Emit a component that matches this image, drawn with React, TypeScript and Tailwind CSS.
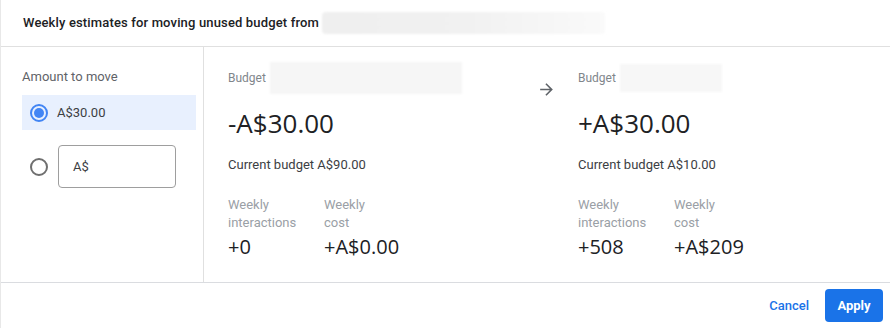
export default function App() {
  return (
    <div className="w-[890px] h-[328px] bg-white border-l border-[#e8e8e8] flex flex-col font-['Roboto',sans-serif] text-[#3c4043]">
      {/* header */}
      <div className="h-[47px] shrink-0 flex items-center pl-[22px] border-b border-[#e0e0e0]">
        <span className="text-[13px] font-medium text-[#202124] tracking-[0.15px]">
          Weekly estimates for moving unused budget from
        </span>
        <div className="ml-[3px] w-[283px] h-[22px] rounded-sm bg-gradient-to-r from-[#efefef] via-[#f1f1f1] to-[#fafafa] blur-[1px]"></div>
      </div>

      {/* body */}
      <div className="flex flex-1 border-b border-[#dadce0]">
        <div className="w-[203px] shrink-0 border-r border-[#e0e0e0] pt-[22px] pl-[21px] pr-[7px]">
          <div className="text-[13px] text-[#5f6368] leading-[16px] mb-[10px]">Amount to move</div>
          <div className="h-[35px] bg-[#e8f0fe] flex items-center pl-[8px]">
            <span className="w-[18px] h-[18px] rounded-full border-2 border-[#4285f4] flex items-center justify-center">
              <span className="w-[10px] h-[10px] rounded-full bg-[#4285f4]"></span>
            </span>
            <span className="ml-[9px] text-[13px] text-[#3c4043]">A$30.00</span>
          </div>
          <div className="flex items-center mt-[15px]">
            <span className="ml-[8px] w-[18px] h-[18px] rounded-full border-2 border-[#6f6f6f]"></span>
            <div className="ml-[10px] w-[118px] h-[43px] border border-[#9e9e9e] rounded-[4px] flex items-center pl-[14px] text-[13px] text-[#3c4043]">
              A$
            </div>
          </div>
        </div>

        <div className="flex-1 flex">
          {/* source */}
          <div className="w-[310px] pl-[24px] pt-[15px]">
            <div className="flex items-center h-[32px]">
              <span className="text-[12px] text-[#80868b]">Budget</span>
              <div className="ml-[4px] w-[192px] h-[32px] bg-[#f6f6f6] blur-[1px]"></div>
            </div>
            <div className="mt-[14px] text-[26px] text-[#202124] font-['Open_Sans',sans-serif] leading-[30px]">-A$30.00</div>
            <div className="mt-[19px] text-[13px] text-[#3c4043] leading-[16px]">Current budget A$90.00</div>
            <Stats a="+0" b="+A$0.00" />
          </div>

          {/* arrow */}
          <div className="w-[64px] pt-[33px] pl-[23px]">
            <svg width="19" height="19" viewBox="0 0 24 24" fill="#5f6368">
              <path d="M12 4l-1.41 1.41L16.17 11H4v2h12.17l-5.58 5.59L12 20l8-8z" />
            </svg>
          </div>

          {/* destination */}
          <div className="flex-1 pt-[15px]">
            <div className="flex items-center h-[32px]">
              <span className="text-[12px] text-[#80868b]">Budget</span>
              <div className="ml-[4px] w-[102px] h-[28px] bg-[#f7f7f7] blur-[1px]"></div>
            </div>
            <div className="mt-[14px] text-[26px] text-[#202124] font-['Open_Sans',sans-serif] leading-[30px]">+A$30.00</div>
            <div className="mt-[19px] text-[13px] text-[#3c4043] leading-[16px]">Current budget A$10.00</div>
            <Stats a="+508" b="+A$209" />
          </div>
        </div>
      </div>

      {/* footer */}
      <div className="h-[45px] shrink-0 flex items-center justify-end pr-[7px]">
        <button className="text-[13px] text-[#1a73e8] font-medium mr-[16px]">Cancel</button>
        <button className="w-[58px] h-[33px] rounded-[4px] bg-[#1a73e8] text-white text-[13px] font-bold">
          Apply
        </button>
      </div>
    </div>
  )
}

function Stats({ a, b }: { a: string; b: string }) {
  return (
    <div className="flex mt-[23px]">
      <div className="w-[96px]">
        <div className="text-[13px] text-[#9aa0a6] leading-[18px]">
          Weekly
          <br />
          interactions
        </div>
        <div className="mt-[2px] text-[20px] text-[#202124] font-['Open_Sans',sans-serif] leading-[26px]">{a}</div>
      </div>
      <div>
        <div className="text-[13px] text-[#9aa0a6] leading-[18px]">
          Weekly
          <br />
          cost
        </div>
        <div className="mt-[2px] text-[20px] text-[#202124] font-['Open_Sans',sans-serif] leading-[26px]">{b}</div>
      </div>
    </div>
  )
}
